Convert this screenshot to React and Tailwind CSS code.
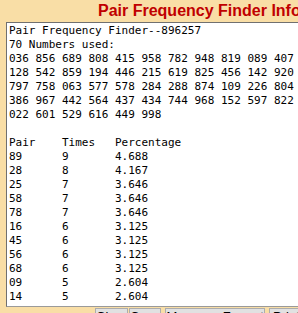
export default function App() {
  const lines = [
    "Pair Frequency Finder--896257",
    "70 Numbers used:",
    "036 856 689 808 415 958 782 948 819 089 407",
    "128 542 859 194 446 215 619 825 456 142 920",
    "797 758 063 577 578 284 288 874 109 226 804",
    "386 967 442 564 437 434 744 968 152 597 822",
    "022 601 529 616 449 998",
    "",
    "Pair    Times   Percentage",
    "89      9       4.688",
    "28      8       4.167",
    "25      7       3.646",
    "58      7       3.646",
    "78      7       3.646",
    "16      6       3.125",
    "45      6       3.125",
    "56      6       3.125",
    "68      6       3.125",
    "09      5       2.604",
    "14      5       2.604",
  ];

  const btn =
    "bg-[#e1e1e1] border border-[#adadad] pt-[1px] pb-[5px] leading-[14px]";

  return (
    <div className="w-[298px] h-[313px] overflow-hidden bg-[#f9dea6]">
      <div className="h-[22px] pl-[98px] whitespace-nowrap font-['Liberation_Sans',Arial,sans-serif] font-bold text-[16px] leading-[21px] text-[#c00000]">
        Pair Frequency Finder Info
      </div>

      <div className="ml-[6px] w-[330px] h-[285px] bg-white border border-[#707070] border-b-[#9a9a9a] pl-[2px] pt-[1px] overflow-hidden">
        <pre className="font-['DejaVu_Sans_Mono',monospace] text-[11px] leading-[14px] text-black">
          {lines.join("\n")}
        </pre>
      </div>

      <div className="flex items-start ml-[95px] mt-[1px] font-['Liberation_Sans',Arial,sans-serif] text-[13px] text-black whitespace-nowrap">
        <button className={`${btn} w-[41px] text-center`}>Clear</button>
        <button className={`${btn} ml-[1px] w-[39px] text-center`}>Copy</button>
        <button className={`${btn} ml-[4px] w-[104px] text-center`}>
          Message Format
        </button>
        <button className={`${btn} ml-[4px] w-[60px] pl-[3px] text-left`}>
          Print
        </button>
      </div>
    </div>
  );
}
